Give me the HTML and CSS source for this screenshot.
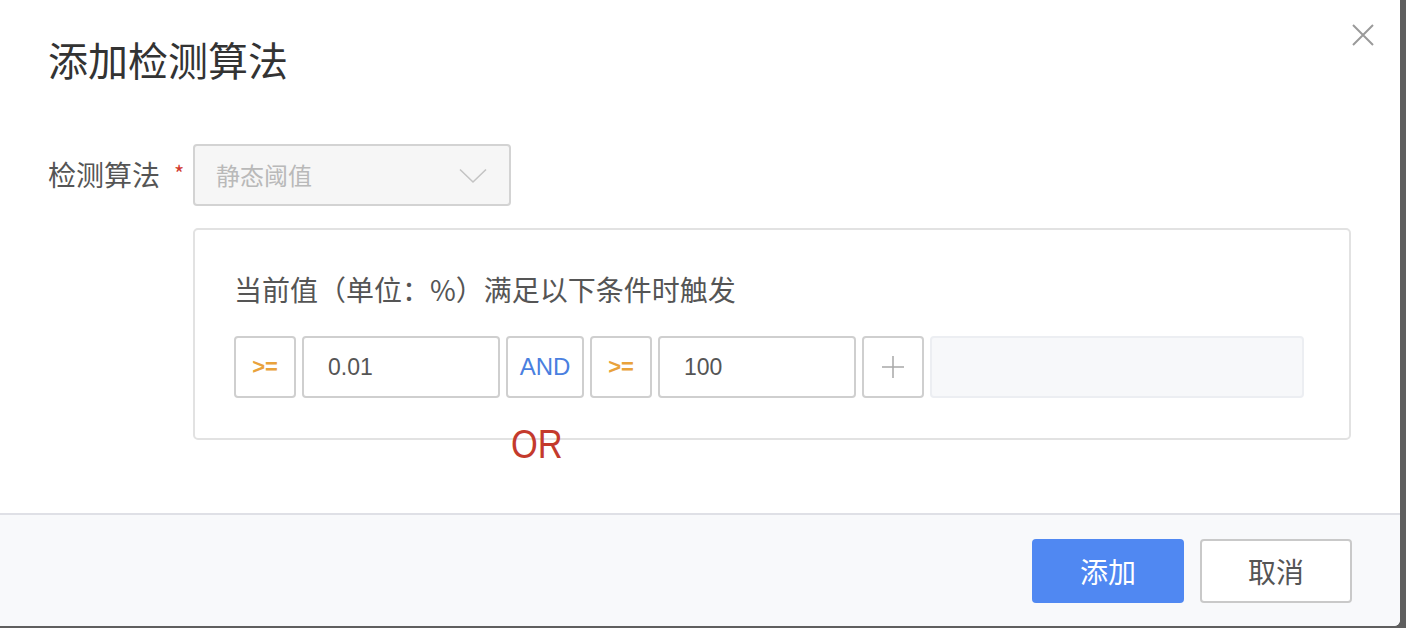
FILE: index.html
```html
<!DOCTYPE html>
<html lang="zh">
<head>
<meta charset="utf-8">
<title>添加检测算法</title>
<link rel="stylesheet" href="styles.css">
</head>
<body>
<div class="modal">
  <div class="modal-header">
    <h1 class="modal-title">添加检测算法</h1>
    <button class="close-btn" aria-label="关闭">
      <svg width="22" height="22" viewBox="0 0 22 22"><path d="M1 1 L21 21 M21 1 L1 21" stroke="#9a9a9a" stroke-width="2" fill="none"/></svg>
    </button>
  </div>
  <div class="modal-body">
    <div class="form-row">
      <label class="form-label">检测算法<span class="req">*</span></label>
      <div class="select">
        <span class="select-text">静态阈值</span>
        <svg class="chevron" width="28" height="16" viewBox="0 0 28 16"><path d="M1 1.5 L14 14 L27 1.5" stroke="#c4c4c4" stroke-width="1.6" fill="none"/></svg>
      </div>
    </div>
    <div class="panel">
      <div class="panel-title">当前值（单位：%）满足以下条件时触发</div>
      <div class="cond-row">
        <div class="cell op">&gt;=</div>
        <div class="cell input">0.01</div>
        <div class="cell logic">AND</div>
        <div class="cell op">&gt;=</div>
        <div class="cell input">100</div>
        <div class="cell plus">
          <svg width="22" height="22" viewBox="0 0 22 22"><path d="M11 0 V22 M0 11 H22" stroke="#a8a8a8" stroke-width="1.5" fill="none"/></svg>
        </div>
        <div class="cell empty"></div>
      </div>
      <div class="or-mark">OR</div>
    </div>
  </div>
  <div class="modal-footer">
    <button class="btn btn-primary">添加</button>
    <button class="btn btn-default">取消</button>
  </div>
</div>
</body>
</html>
```
FILE: styles.css
```css
* { box-sizing: border-box; }
html, body { margin: 0; padding: 0; }
body {
  background: #5f5f5f;
  width: 1406px;
  height: 628px;
  overflow: hidden;
  font-family: "Noto Sans CJK SC", "Liberation Sans", sans-serif;
}
.modal {
  width: 1400px;
  height: 626px;
  background: #fff;
  display: flex;
  flex-direction: column;
  border-radius: 0 0 6px 0;
  overflow: hidden;
}
.modal-header {
  position: relative;
  padding: 35px 48px 0;
}
.modal-title {
  margin: 0;
  font-size: 40px;
  line-height: 48px;
  font-weight: 400;
  color: #333;
}
.close-btn {
  position: absolute;
  top: 24px;
  right: 26px;
  padding: 0;
  border: 0;
  background: none;
  width: 22px;
  height: 22px;
}
.close-btn svg { display: block; }
.modal-body {
  flex: 1;
  padding: 61px 48px 0;
}
.form-row {
  display: flex;
  align-items: center;
}
.form-label {
  width: 145px;
  font-size: 28px;
  color: #555;
  line-height: 40px;
}
.req {
  color: #d23b2f;
  font-size: 22px;
  margin-left: 14px;
  position: relative;
  top: -4px;
}
.select {
  width: 318px;
  height: 62px;
  border: 2px solid #d3d3d3;
  border-radius: 4px;
  background: #f6f6f6;
  display: flex;
  align-items: center;
  justify-content: space-between;
  padding: 0 22px 0 21px;
}
.select-text {
  font-size: 24px;
  color: #b9b9b9;
  position: relative;
  top: -1px;
}
.chevron { display: block; margin-top: 2px; }
.panel {
  position: relative;
  margin: 22px 0 0 145px;
  width: 1158px;
  height: 212px;
  border: 2px solid #e2e2e2;
  border-radius: 5px;
  padding: 39px 39px 0;
}
.panel-title {
  font-size: 28px;
  line-height: 40px;
  color: #555;
}
.cond-row {
  display: flex;
  gap: 6px;
  margin-top: 27px;
}
.cell {
  flex: none;
  height: 62px;
  border: 2px solid #cfcfcf;
  border-radius: 4px;
  background: #fff;
  display: flex;
  align-items: center;
  justify-content: center;
  font-family: "Liberation Sans", "Noto Sans CJK SC", sans-serif;
  font-size: 23px;
}
.op {
  width: 62px;
  color: #e9a23b;
  font-weight: 700;
  font-size: 22px;
}
.input {
  width: 198px;
  justify-content: flex-start;
  padding-left: 24px;
  color: #555;
}
.logic {
  width: 78px;
  color: #4a7fe0;
  font-size: 24px;
}
.plus { width: 62px; }
.plus svg { display: block; }
.empty {
  width: 374px;
  background: #f7f8fa;
  border-color: #eceef2;
}
.or-mark {
  position: absolute;
  left: 316px;
  top: 194px;
  font-family: "Liberation Sans", sans-serif;
  font-size: 40px;
  line-height: 40px;
  color: #c43a2c;
  transform: scaleX(0.86);
  transform-origin: left top;
}
.modal-footer {
  height: 113px;
  border-top: 2px solid #dfe0e6;
  background: #f8f9fb;
  display: flex;
  justify-content: flex-end;
  align-items: flex-start;
  gap: 16px;
  padding: 24px 48px 0 0;
}
.btn {
  width: 152px;
  height: 64px;
  border-radius: 4px;
  font-family: "Noto Sans CJK SC", sans-serif;
  font-size: 28px;
  cursor: pointer;
}
.btn-primary {
  background: #5088f2;
  border: 0;
  color: #fff;
}
.btn-default {
  background: #fff;
  border: 2px solid #c9c9c9;
  color: #555;
}
```
